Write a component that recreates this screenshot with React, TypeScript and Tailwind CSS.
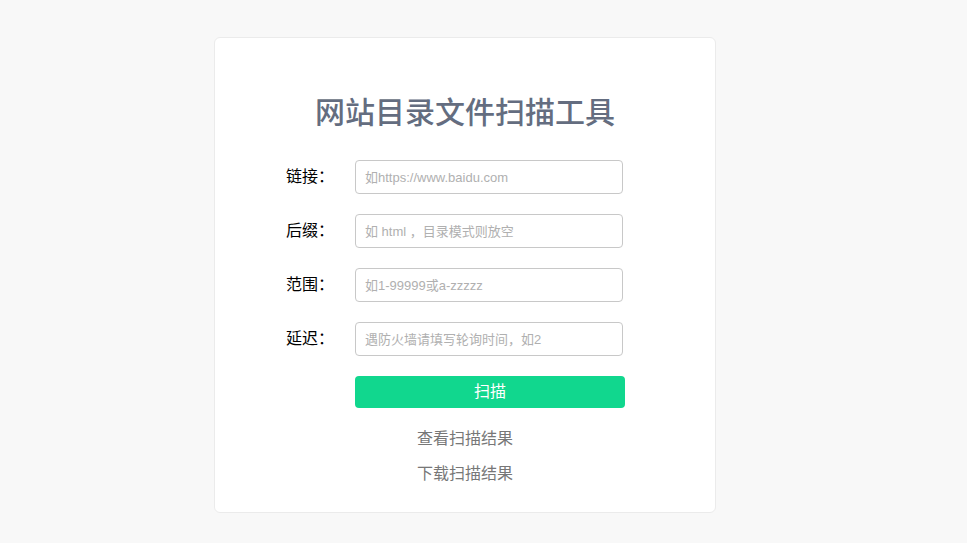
export default function App() {
  const rows = [
    { label: "链接：", placeholder: "如https://www.baidu.com" },
    { label: "后缀：", placeholder: "如 html ，目录模式则放空" },
    { label: "范围：", placeholder: "如1-99999或a-zzzzz" },
    { label: "延迟：", placeholder: "遇防火墙请填写轮询时间，如2" },
  ];

  return (
    <div className="min-h-[543px] bg-[#f8f8f8] pt-[37px] font-['Liberation_Sans','Noto_Sans_CJK_SC',sans-serif]">
      <div className="ml-[214px] w-[502px] rounded-md border border-[#ebebeb] bg-white pt-[55px] pb-[26px]">
        <h1 className="text-center font-['Liberation_Serif','Noto_Sans_CJK_SC',serif] text-[30px] leading-[40px] font-medium text-[#646d80]">
          网站目录文件扫描工具
        </h1>

        <form className="mt-[27px] flex flex-col gap-5 pl-[71px]">
          {rows.map((row) => (
            <div key={row.label} className="flex items-center">
              <label className="w-[69px] text-base text-black">{row.label}</label>
              <input
                type="text"
                placeholder={row.placeholder}
                className="h-[34px] w-[268px] rounded border border-[#c8c8c8] px-[9px] text-[13px] text-gray-700 outline-none placeholder:text-[#b0b0b0]"
              />
            </div>
          ))}
          <div className="pl-[69px]">
            <button
              type="button"
              className="h-8 w-[270px] rounded bg-[#11d78e] text-base text-white"
            >
              扫描
            </button>
          </div>
        </form>

        <div className="mt-[19px] flex flex-col items-center gap-[11px] text-base leading-6 text-[#777777]">
          <a href="#">查看扫描结果</a>
          <a href="#">下载扫描结果</a>
        </div>
      </div>
    </div>
  );
}
